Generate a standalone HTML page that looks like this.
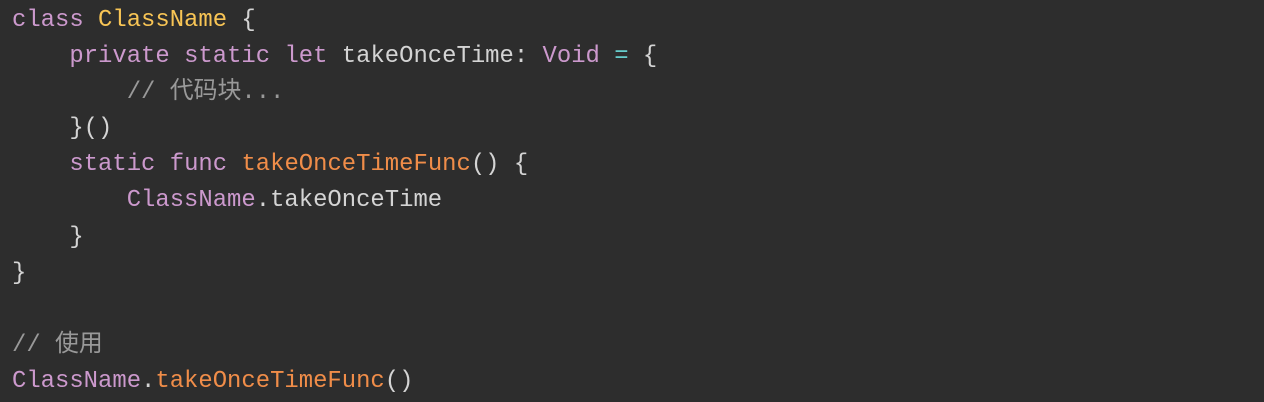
<!DOCTYPE html>
<html><head><meta charset="utf-8"><style>
html,body{margin:0;padding:0;background:#2d2d2d;width:1264px;height:402px;overflow:hidden}
pre{margin:0;padding:3px 0 0 12px;font-family:"Liberation Mono","Noto Sans CJK SC",monospace;font-size:23.9px;line-height:36.1px;color:#d4d4d4}
.k{color:#cc99cd}.y{color:#f8c555}.c{color:#999999}.f{color:#f08d49}.o{color:#67cdcc}
</style></head><body><pre><span class="k">class</span> <span class="y">ClassName</span> {
    <span class="k">private</span> <span class="k">static</span> <span class="k">let</span> takeOnceTime: <span class="k">Void</span> <span class="o">=</span> {
        <span class="c">// 代码块...</span>
    }()
    <span class="k">static</span> <span class="k">func</span> <span class="f">takeOnceTimeFunc</span>() {
        <span class="k">ClassName</span>.takeOnceTime
    }
}

<span class="c">// 使用</span>
<span class="k">ClassName</span>.<span class="f">takeOnceTimeFunc</span>()
</pre></body></html>
